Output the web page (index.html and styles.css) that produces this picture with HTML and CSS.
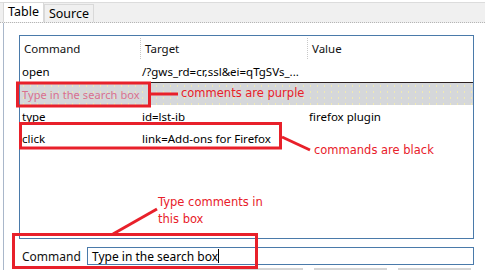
FILE: index.html
```html
<!DOCTYPE html>
<html lang="en">
<head>
    <meta charset="UTF-8">
    <title>Selenium IDE - comments</title>
    <link rel="stylesheet" href="styles.css">
</head>
<body>
    <div class="tabs">
        <div class="tab active">Table</div>
        <div class="tab">Source</div>
    </div>

    <div class="content">
        <div class="grid">
            <div class="row head">
                <div class="cell c1">Command</div>
                <div class="cell c2">Target</div>
                <div class="cell c3">Value</div>
            </div>
            <div class="row">
                <div class="cell c1">open</div>
                <div class="cell c2">/?gws_rd=cr,ssl&amp;ei=qTgSVs_...</div>
                <div class="cell c3"></div>
            </div>
            <div class="row comment selected">
                <div class="cell full">Type in the search box</div>
            </div>
            <div class="row">
                <div class="cell c1">type</div>
                <div class="cell c2">id=lst-ib</div>
                <div class="cell c3">firefox plugin</div>
            </div>
            <div class="row">
                <div class="cell c1">click</div>
                <div class="cell c2">link=Add-ons for Firefox</div>
                <div class="cell c3"></div>
            </div>
        </div>

        <div class="cmd-row">
            <label class="cmd-label">Command</label>
            <div class="cmd-input">Type in the search box<span class="caret"></span></div>
        </div>

        <div class="buttons">
            <div class="btn"></div>
            <div class="btn"></div>
            <div class="btn"></div>
        </div>
    </div>

    <!-- red annotations drawn over the screenshot -->
    <svg class="marks" width="485" height="270" viewBox="0 0 485 270">
        <g fill="none" stroke="#e8202a" stroke-width="3">
            <rect x="17.5" y="83" width="132" height="23"/>
            <rect x="20.5" y="123.5" width="260" height="24.5"/>
            <rect x="13.5" y="234.5" width="243" height="33"/>
        </g>
        <g stroke="#e8202a" stroke-width="3">
            <line x1="151" y1="94" x2="178" y2="94"/>
            <line x1="282" y1="137" x2="310" y2="150"/>
            <line x1="157" y1="209" x2="113" y2="234"/>
        </g>
    </svg>
    <div class="note note-purple">comments are purple</div>
    <div class="note note-black">commands are black</div>
    <div class="note note-box">Type comments in<br>this box</div>
</body>
</html>
```

FILE: styles.css
```css
* {
    margin: 0;
    padding: 0;
    box-sizing: border-box;
}

body {
    width: 485px;
    height: 270px;
    overflow: hidden;
    background: #fff;
    font-family: 'Noto Sans', 'Open Sans', sans-serif;
    font-size: 11.5px;
    color: #000;
    position: relative;
}

.tabs {
    height: 23px;
    display: flex;
    align-items: flex-end;
    padding-left: 3px;
    background: #f0f0f0;
    border-top: 2px solid #fff;
    box-shadow: inset 0 1px 0 #dcdcdc;
    border-bottom: 1px dotted #b5b5b5;
}

.tab {
    height: 18px;
    padding: 0 4px;
    line-height: 17px;
    border: 1px solid #d9d9d9;
    border-bottom: none;
    background: #f0f0f0;
    font-size: 12.5px;
}

.tab.active {
    height: 20px;
    background: #fff;
    line-height: 17px;
}

.content {
    margin-left: 3px;
    height: 247px;
    border-left: 1px solid #a9b7ca;
    padding: 12px 0 0 15px;
}

.grid {
    width: 455px;
    height: 204px;
    border: 1px solid #4a7aaa;
}

.row {
    display: flex;
    height: 21px;
    align-items: center;
}

.row.head {
    height: 25px;
}

.cell {
    padding-left: 2px;
    white-space: nowrap;
    overflow: hidden;
}

.c1 { width: 120px; }
.c2 { width: 167px; }
.c3 { flex: 1; }
.full { flex: 1; }

.head .cell {
    height: 21px;
    line-height: 21px;
    padding-left: 4px;
    color: #111;
}

.head .c2,
.head .c3 {
    border-left: 1px dotted #c8c8c8;
}

.row.selected {
    height: 23px;
    border-top: 1px solid #2b2020;
    background-color: #d5d7da;
    background-image: radial-gradient(circle, rgba(246, 238, 170, .8) 0.5px, transparent 0.8px);
    background-size: 7px 6px;
}

.row.selected + .row,
.row.selected + .row + .row {
    height: 22px;
}

.comment .cell {
    color: #d9708f;
    font-size: 11px;
    letter-spacing: .1px;
}

.cmd-row {
    display: flex;
    align-items: center;
    margin-top: 8px;
}

.cmd-label {
    width: 68px;
    padding-left: 3px;
    font-size: 12px;
    color: #111;
}

.cmd-input {
    width: 387px;
    height: 18px;
    border: 1px solid #4a7aaa;
    padding-left: 4px;
    font-size: 12px;
    display: flex;
    align-items: center;
}

.caret {
    display: inline-block;
    width: 1px;
    height: 14px;
    background: #000;
}

.buttons {
    display: flex;
    gap: 11px;
    margin: 3px 0 0 211px;
}

.btn {
    width: 73px;
    height: 8px;
    border-top: 2px solid #d6d6d6;
}

.marks {
    position: absolute;
    left: 0;
    top: 0;
    pointer-events: none;
}

.note {
    position: absolute;
    color: #e8202a;
    font-family: 'DejaVu Sans', sans-serif;
    font-size: 11.5px;
    line-height: 17px;
    white-space: nowrap;
}

.note-purple {
    left: 181px;
    top: 85px;
}

.note-black {
    left: 314px;
    top: 142px;
}

.note-box {
    left: 158px;
    top: 194px;
}
```
